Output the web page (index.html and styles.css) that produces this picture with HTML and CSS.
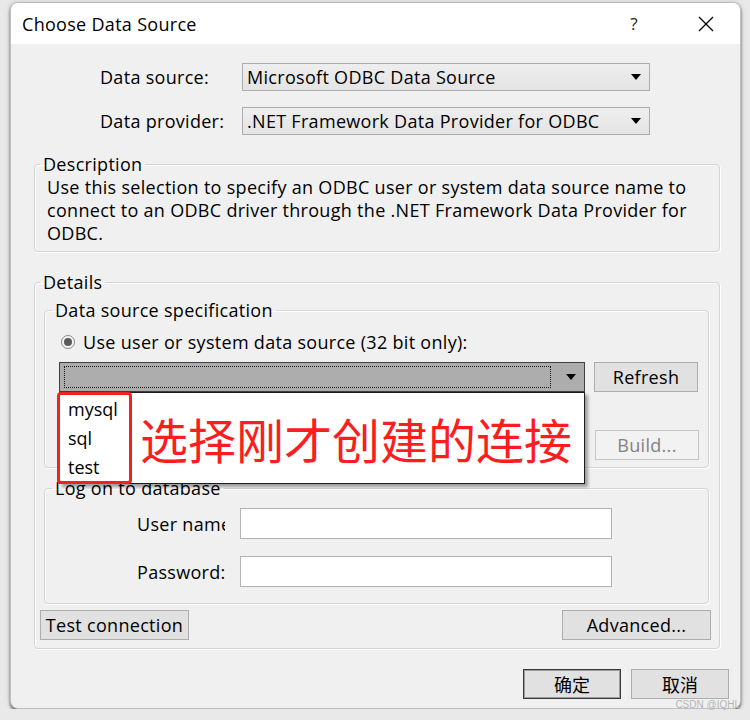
FILE: index.html
```html
<!DOCTYPE html>
<html>
  <head>
    <meta charset="utf-8">
    <title>Choose Data Source</title>
    <link rel="stylesheet" href="styles.css">
  </head>
  <body>
    <div class="window">
      <div class="titlebar">
        <span class="title">Choose Data Source</span>
        <span class="help">?</span>
        <span class="close">
          <svg width="16" height="16" viewBox="0 0 16 16"><path d="M1 1L15 15M15 1L1 15" stroke="#000" stroke-width="1.3" fill="none"/></svg>
        </span>
      </div>

      <div class="content">
        <div class="source-grid">
          <span class="label">Data source:</span>
          <div class="select">
            <span>Microsoft ODBC Data Source</span>
            <svg class="arrow" width="10" height="6" viewBox="0 0 10 6"><polygon points="0,0 10,0 5,6" fill="#000"/></svg>
          </div>
          <span class="label">Data provider:</span>
          <div class="select">
            <span>.NET Framework Data Provider for ODBC</span>
            <svg class="arrow" width="10" height="6" viewBox="0 0 10 6"><polygon points="0,0 10,0 5,6" fill="#000"/></svg>
          </div>
        </div>

        <fieldset class="group desc">
          <legend>Description</legend>
          <p>Use this selection to specify an ODBC user or system data source name to connect to an ODBC driver through the .NET Framework Data Provider for ODBC.</p>
        </fieldset>

        <fieldset class="group details">
          <legend>Details</legend>

          <fieldset class="group spec">
            <legend>Data source specification</legend>
            <div class="radio-row">
              <span class="radio"><span class="dot"></span></span>
              <span>Use user or system data source (32 bit only):</span>
            </div>
            <div class="combo-row">
              <div class="combo">
                <span class="focus"></span>
                <svg class="arrow" width="10" height="6" viewBox="0 0 10 6"><polygon points="0,0 10,0 5,6" fill="#000"/></svg>
                <div class="dropdown">
                  <ul class="items">
                    <li>mysql</li>
                    <li>sql</li>
                    <li>test</li>
                  </ul>
                  <span class="note">选择刚才创建的连接</span>
                </div>
              </div>
              <button class="btn">Refresh</button>
            </div>
            <div class="build-row">
              <button class="btn" disabled>Build...</button>
            </div>
          </fieldset>

          <fieldset class="group logon">
            <legend>Log on to database</legend>
            <div class="field">
              <span class="field-label">User name:</span>
              <span class="input"></span>
            </div>
            <div class="field">
              <span class="field-label">Password:</span>
              <span class="input"></span>
            </div>
          </fieldset>

          <div class="detail-buttons">
            <button class="btn wide">Test connection</button>
            <button class="btn wide">Advanced...</button>
          </div>
        </fieldset>

        <div class="dialog-buttons">
          <button class="btn cjk default">确定</button>
          <button class="btn cjk">取消</button>
        </div>
      </div>
    </div>
    <div class="watermark">CSDN @IQHL</div>
  </body>
</html>
```

FILE: styles.css
```css
*{
  margin: 0;
  padding: 0;
  box-sizing: border-box;
}
body{
  background-color: #e9e9e9;
  font-family: "Open Sans", "Liberation Sans", sans-serif;
  font-size: 18px;
  letter-spacing: 0.3px;
  color: #000;
  overflow: hidden;
}
.window{
  width: 731px;
  height: 707px;
  margin: 2px 0 0 10px;
  border: 1px solid #bdbdbd;
  border-radius: 8px;
  background-color: #f0f0f0;
  overflow: hidden;
  box-shadow: 0 2px 3px rgba(0,0,0,.55), 0 0 6px rgba(0,0,0,.12);
}

/* title bar */
.titlebar{
  height: 41px;
  background-color: #fff;
  display: flex;
  align-items: center;
  padding: 0 26px 0 11px;
}
.title{
  font-size: 18px;
}
.help{
  margin-left: auto;
  font-size: 17px;
  color: #222;
}
.close{
  display: flex;
  margin-left: 60px;
}

.content{
  padding: 19px 11px 0 23px;
}

/* data source / provider */
.source-grid{
  display: grid;
  grid-template-columns: 142px 408px;
  row-gap: 16px;
  margin-left: 66px;
  align-items: center;
}
.select{
  height: 28px;
  border: 1px solid #acacac;
  background: linear-gradient(#eeeeee, #e4e4e4);
  display: flex;
  align-items: center;
  padding: 0 8px 0 4px;
  line-height: 26px;
}
.select span{
  flex: 1;
}
.arrow{
  display: block;
}

/* group boxes */
.group{
  border: 1px solid #d5d5d5;
  border-radius: 4px;
  box-shadow: inset 1px 1px 0 #fff, 1px 1px 0 #fff;
  min-width: 0;
}
.group legend{
  line-height: 22px;
  padding: 0 3px;
}
.desc{
  margin: 18px 9px 0 0;
  padding: 1px 12px 6px 12px;
}
.desc legend{
  margin-left: -7px;
}
.desc p{
  line-height: 23px;
}

.details{
  margin: 19px 9px 0 0;
  padding: 0 8px 8px 5px;
}

.spec{
  margin: 6px 2px 0 4px;
  padding: 10px 9px 7px 14px;
}
.spec legend{
  margin-left: -7px;
}
.radio-row{
  height: 22px;
  display: flex;
  align-items: center;
  gap: 8px;
  margin-left: 2px;
}
.radio{
  width: 14px;
  height: 14px;
  border: 1px solid #8a8a8a;
  border-radius: 50%;
  background-color: #f4f4f4;
  display: flex;
  align-items: center;
  justify-content: center;
}
.dot{
  width: 8px;
  height: 8px;
  border-radius: 50%;
  background-color: #5a5a5a;
}
.combo-row{
  display: flex;
  gap: 9px;
  margin-top: 9px;
}
.combo{
  position: relative;
  width: 526px;
  height: 30px;
  border: 1px solid #3f3f3f;
  background-color: #adadad;
  display: flex;
  align-items: center;
  padding: 0 8px 0 4px;
  gap: 15px;
}
.focus{
  flex: 1;
  height: 22px;
  border: 1px dotted #1a1a1a;
}
.dropdown{
  position: absolute;
  top: 29px;
  left: -1px;
  width: 526px;
  height: 92px;
  background-color: #fff;
  border: 1px solid #1c1c1c;
  box-shadow: 3px 3px 3px rgba(0,0,0,.35);
  display: flex;
  align-items: center;
  z-index: 2;
}
.items{
  list-style: none;
  align-self: flex-start;
  width: 75px;
  height: 92px;
  margin: -1px 0 0 -3px;
  border: 3px solid #f32020;
  border-radius: 4px;
  padding: 0 0 0 8px;
  letter-spacing: 0;
}
.items li{
  line-height: 29px;
}
.note{
  margin-left: 8px;
  font-family: "Noto Sans CJK SC", sans-serif;
  font-size: 48px;
  line-height: 56px;
  letter-spacing: 0;
  color: #fa1e1e;
}
.build-row{
  display: flex;
  justify-content: flex-end;
  margin-top: 38px;
}

.btn{
  font-family: inherit;
  font-size: 18px;
  letter-spacing: 0.3px;
  color: #000;
  width: 104px;
  height: 30px;
  border: 1px solid #adadad;
  background-color: #e1e1e1;
}
.btn:disabled{
  color: #838383;
  background-color: #f2f2f2;
  border-color: #c6c6c6;
}
.btn.wide{
  width: 149px;
  height: 30px;
}

.logon{
  margin: 9px 2px 0 4px;
  padding: 9px 0 16px 92px;
}
.logon legend{
  margin-left: -85px;
}
.field{
  display: flex;
  align-items: center;
  gap: 15px;
}
.field + .field{
  margin-top: 17px;
}
.field-label{
  width: 88px;
  white-space: nowrap;
  overflow: hidden;
}
.input{
  width: 372px;
  height: 31px;
  border: 1px solid #b2b2b2;
  background-color: #fff;
}

.detail-buttons{
  display: flex;
  justify-content: space-between;
  margin-top: 6px;
}

.dialog-buttons{
  display: flex;
  justify-content: flex-end;
  gap: 10px;
  margin-top: 20px;
}
.btn.cjk{
  width: 98px;
  font-family: "Noto Sans CJK SC", sans-serif;
  font-size: 18px;
  letter-spacing: 0;
}
.btn.default{
  border: 1px solid #3a3a3a;
  box-shadow: inset 0 0 0 1px #9c9c9c;
}

.watermark{
  position: absolute;
  right: 10px;
  top: 699px;
  font-size: 10px;
  letter-spacing: 0;
  color: #b5b5b5;
  font-family: "Liberation Sans", Arial, sans-serif;
}
```
